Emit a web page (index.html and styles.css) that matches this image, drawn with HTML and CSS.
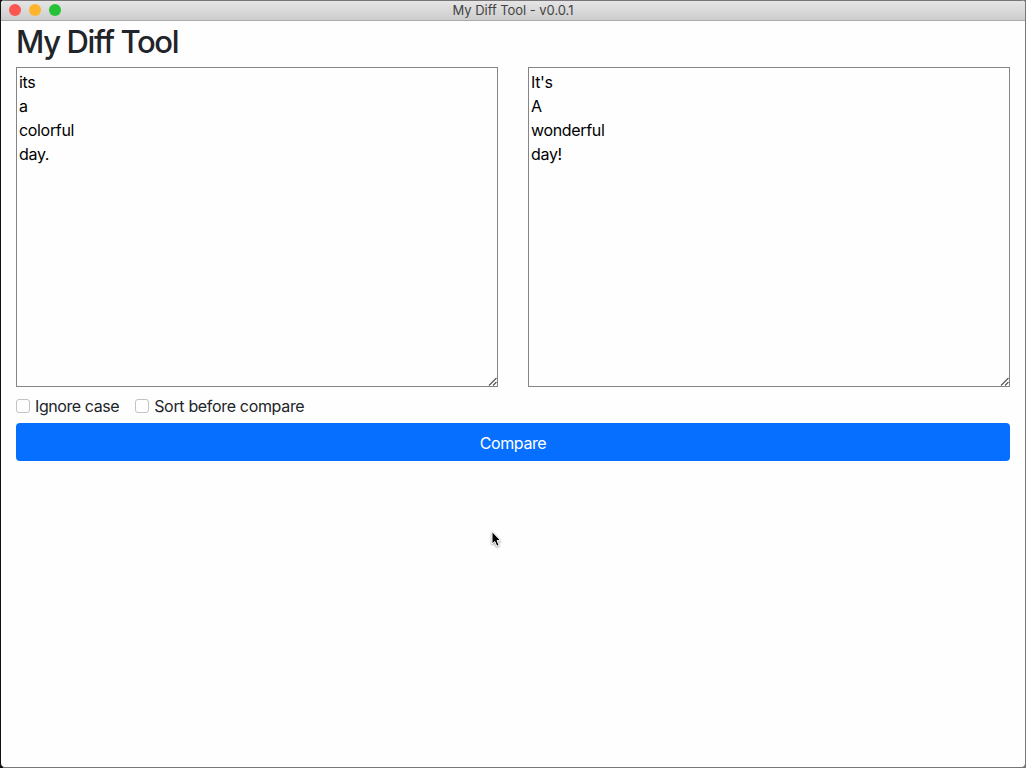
FILE: index.html
```
<!DOCTYPE html>
<html lang="en">
<head>
<meta charset="utf-8">
<title>My Diff Tool - v0.0.1</title>
<link rel="stylesheet" href="styles.css">
</head>
<body>
<div class="window">
  <header class="titlebar">
    <div class="lights"><span class="light close"></span><span class="light minimize"></span><span class="light zoom"></span></div>
    <span class="window-title">My Diff Tool - v0.0.1</span>
  </header>
  <main class="content">
    <h1 class="heading">My Diff Tool</h1>
    <div class="editors">
      <div class="editor"><textarea class="text" spellcheck="false">its
a
colorful
day.</textarea><svg class="grip" viewBox="0 0 9 9"><path d="M1 8.5 8.5 1M5 8.5 8.5 5"/></svg></div>
      <div class="editor"><textarea class="text" spellcheck="false">It's
A
wonderful
day!</textarea><svg class="grip" viewBox="0 0 9 9"><path d="M1 8.5 8.5 1M5 8.5 8.5 5"/></svg></div>
    </div>
    <div class="options">
      <label class="option"><input class="check" type="checkbox"><span class="label-case">Ignore case</span></label>
      <label class="option"><input class="check" type="checkbox"><span>Sort before compare</span></label>
    </div>
    <button class="compare">Compare</button>
  </main>
</div>
<svg class="cursor" viewBox="0 0 14 20"><path d="M2 1.5V14l2.8-2.5 2 4.8 2.3-1-2-4.7h3.6z"/></svg>
</body>
</html>
```
FILE: styles.css
```
* { box-sizing: border-box; }
body {
  margin: 0;
  height: 768px;
  padding: 0 1px 1px;
  overflow: hidden;
  background: linear-gradient(90deg, #111 0 3px, #777 3px);
  font: 16px/24px Inter, "Liberation Sans", sans-serif;
  letter-spacing: -0.33px;
  color: #212529;
}
.window {
  height: 767px;
  overflow: hidden;
  border-radius: 4px;
  background: #fefefe;
}
.titlebar {
  position: relative;
  display: flex;
  align-items: flex-start;
  justify-content: center;
  height: 21px;
  border-top: 1px solid #787477;
  border-bottom: 1px solid #aaa;
  background: linear-gradient(#e5e5e5, #cdcdcd);
}
.lights {
  position: absolute;
  left: 8px;
  top: 3px;
  display: flex;
  gap: 8px;
}
.light { width: 12px; height: 12px; border-radius: 50%; }
.close { background: #fc5650; }
.minimize { background: #fdb42c; }
.zoom { background: #27c137; }
.window-title {
  font-size: 13px;
  line-height: 18px;
  letter-spacing: -0.05px;
  color: #444;
}
.content { padding: 2px 15px 0; }
.heading {
  margin: 0 0 6px;
  font-size: 31px;
  line-height: 38px;
  font-weight: 500;
  letter-spacing: -1.35px;
}
.editors { display: grid; grid-template-columns: 1fr 1fr; gap: 30px; }
.editor { position: relative; height: 320px; }
.text {
  display: block;
  width: 100%;
  height: 100%;
  margin: 0;
  padding: 2px;
  border: 1px solid #858585;
  border-radius: 0;
  outline: none;
  resize: none;
  background: transparent;
  font: inherit;
  letter-spacing: inherit;
  color: #000;
}
.grip {
  position: absolute;
  right: 1px;
  bottom: 1px;
  width: 9px;
  height: 9px;
  fill: none;
  stroke: #555;
  stroke-width: 1.1;
}
.options { display: flex; gap: 16px; margin: 7px 0 5px; }
.option { display: flex; align-items: center; gap: 5px; }
.label-case { letter-spacing: -0.42px; }
.check {
  appearance: none;
  width: 14px;
  height: 14px;
  margin: 0;
  border: 1px solid #c2c2c2;
  border-radius: 3px;
  background: #fff;
}
.compare {
  display: block;
  width: 100%;
  height: 38px;
  padding: 1px 0 0;
  border: 0;
  border-radius: 4px;
  background: #076fff;
  font: inherit;
  letter-spacing: -0.4px;
  color: #fff;
}
.cursor {
  position: absolute;
  left: 490px;
  top: 530px;
  width: 14px;
  height: 20px;
  fill: #000;
  stroke: #fff;
  stroke-width: 1;
  filter: drop-shadow(0 1px 1px rgba(0, 0, 0, .4));
}
```
